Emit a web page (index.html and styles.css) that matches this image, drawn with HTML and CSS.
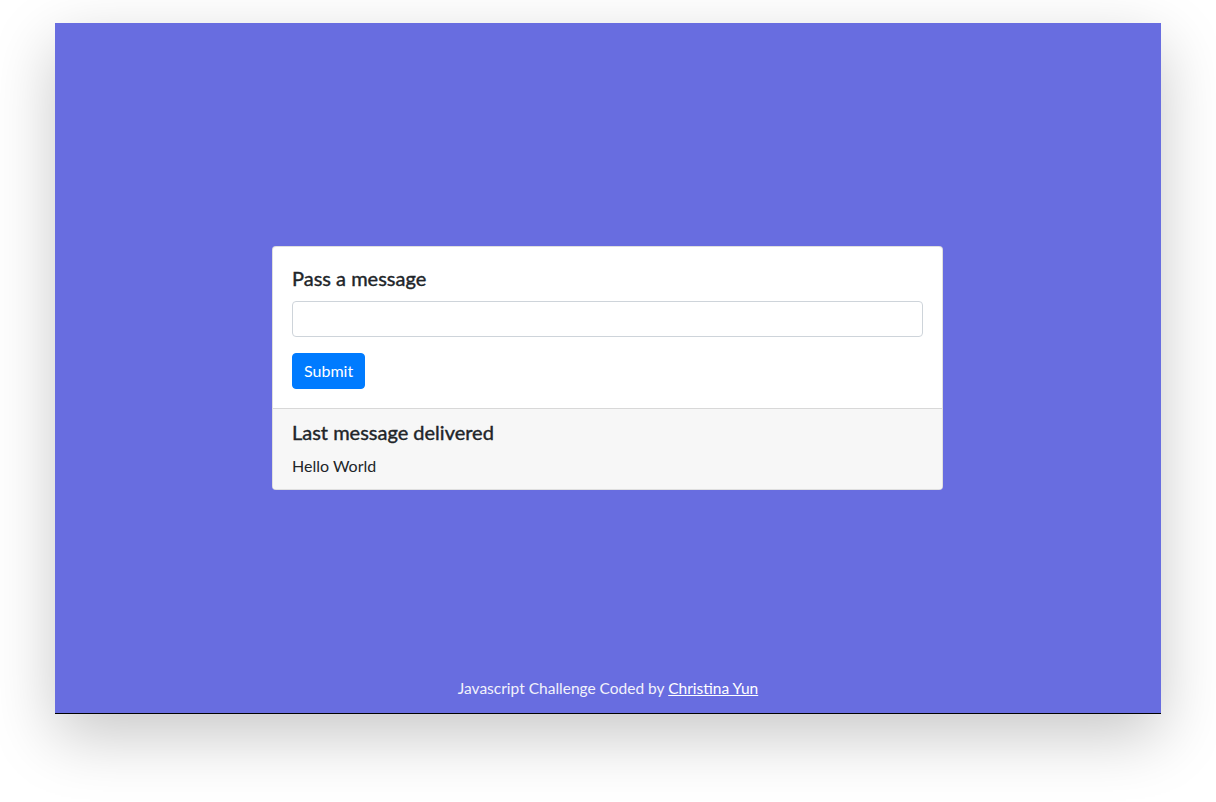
FILE: index.html
```html
<!DOCTYPE html>
<html lang="en">
<head>
<meta charset="utf-8">
<title>Pass a message</title>
<link rel="stylesheet" href="styles.css">
</head>
<body>
<div class="frame">
  <div class="spacer"></div>
  <div class="card">
    <div class="card-body">
      <h5 class="card-title">Pass a message</h5>
      <input class="form-control" type="text">
      <button class="btn" type="button">Submit</button>
    </div>
    <div class="card-footer">
      <h5 class="card-title">Last message delivered</h5>
      <p class="message">Hello World</p>
    </div>
  </div>
  <footer class="credit">Javascript Challenge Coded by <a href="#">Christina Yun</a></footer>
</div>
</body>
</html>
```

FILE: styles.css
```css
html, body {
  margin: 0;
  padding: 0;
  background: #ffffff;
}
body {
  padding: 23px 55px 88px;
  font-family: "Lato", "Noto Sans", sans-serif;
  color: #212529;
  font-size: 16px;
  line-height: 24px;
}
.frame {
  height: 690px;
  background: #686de0;
  border-bottom: 1px solid #000;
  box-shadow: 0 22px 60px rgba(0, 0, 0, 0.22);
  display: grid;
  grid-template-rows: 1fr auto 1fr;
  justify-items: center;
}
.card {
  width: 671px;
  margin-right: 1px;
  box-sizing: border-box;
  background: #fff;
  border: 1px solid rgba(0, 0, 0, 0.125);
  border-radius: 4px;
  overflow: hidden;
}
.card-body {
  padding: 19px 19px 19px 19px;
  display: flex;
  flex-direction: column;
  align-items: flex-start;
}
.card-title {
  margin: 0 0 11px;
  font-size: 20px;
  line-height: 24px;
  font-weight: 400;
  -webkit-text-stroke: 0.4px currentColor;
  color: #212529;
}
.form-control {
  box-sizing: border-box;
  width: 100%;
  height: 36px;
  margin: 0 0 16px;
  padding: 6px 12px;
  border: 1px solid #ced4da;
  border-radius: 4px;
  background: #fff;
  font: inherit;
}
.btn {
  height: 36px;
  padding: 0 11px;
  border: 1px solid #007bff;
  border-radius: 4px;
  background: #007bff;
  color: #fff;
  font: inherit;
  font-size: 16px;
}
.card-footer {
  background: #f7f7f7;
  border-top: 1px solid rgba(0, 0, 0, 0.125);
  padding: 11px 20px 11px 19px;
}
.card-footer .card-title {
  margin-bottom: 10px;
}
.message {
  margin: 0;
}
.credit {
  align-self: end;
  padding-bottom: 13px;
  color: #f2f2fb;
  font-size: 15.5px;
}
.credit a {
  color: #fff;
  text-decoration: underline;
}
```
